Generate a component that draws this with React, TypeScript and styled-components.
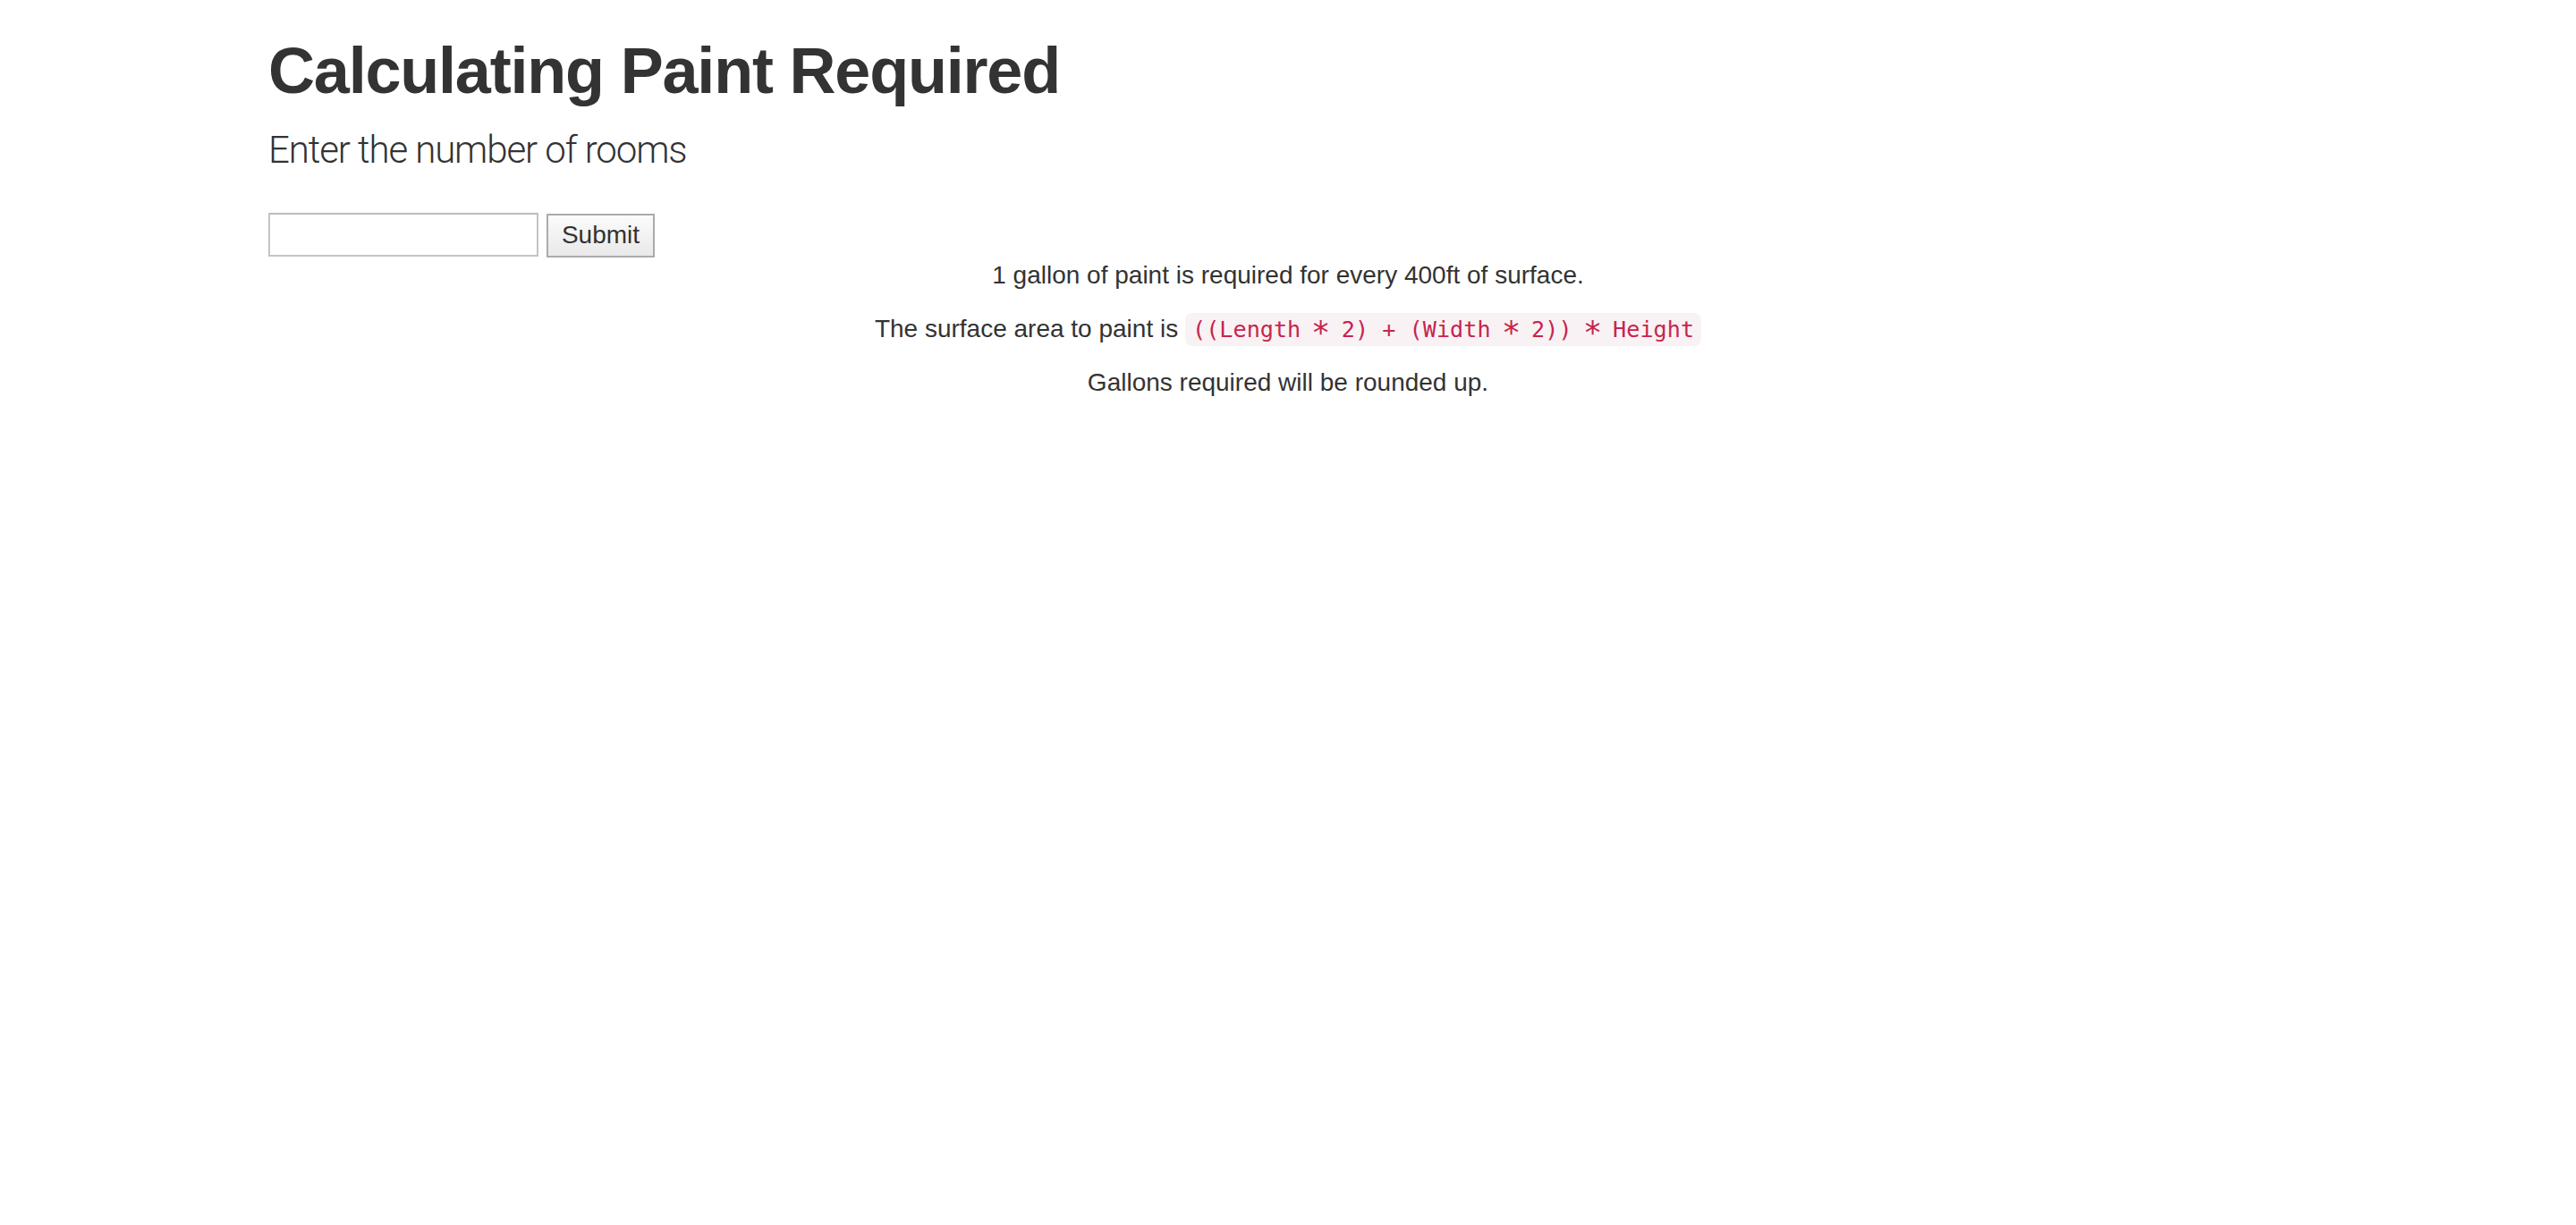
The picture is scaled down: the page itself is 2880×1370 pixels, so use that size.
import React from "react";
import styled, { createGlobalStyle } from "styled-components";

const GlobalStyle = createGlobalStyle`
  html, body {
    margin: 0;
    padding: 0;
    background: #ffffff;
  }
  body {
    font-family: "Liberation Sans", Helvetica, Arial, sans-serif;
    font-size: 28px;
    line-height: 1.42857143;
    color: #333333;
  }
  * { box-sizing: border-box; }
`;

const Container = styled.div`
  width: 2340px;
  margin: 0 auto;
  padding: 0 30px;
`;

const Title = styled.h1`
  font-family: "Liberation Sans", Helvetica, Arial, sans-serif;
  font-size: 72px;
  font-weight: 700;
  letter-spacing: -1.2px;
  line-height: 1.1;
  margin: 40px 0 20px;
  color: #333333;
`;

const Lead = styled.p`
  font-family: Roboto, "Liberation Sans", sans-serif;
  font-size: 42px;
  font-weight: 300;
  letter-spacing: -1.1px;
  line-height: 1.4;
  margin: 0 0 40px;
`;

const Form = styled.form`
  display: flex;
  align-items: flex-start;
  gap: 9px;
  margin: 0;
`;

const TextInput = styled.input`
  width: 302px;
  height: 49px;
  margin: 0;
  padding: 2px 6px;
  border: 2px solid #c4c4c4;
  border-top-color: #bcbcbc;
  background: #ffffff;
  font-family: "Liberation Sans", Arial, sans-serif;
  font-size: 26px;
  color: #333333;
  outline: none;
`;

const SubmitButton = styled.button`
  width: 121px;
  height: 49px;
  margin: 1px 0 0;
  padding: 0;
  border: 2px solid #ababab;
  border-radius: 0;
  background: linear-gradient(#fbfbfb, #e9e9e9);
  font-family: "Liberation Sans", Helvetica, Arial, sans-serif;
  font-size: 28px;
  line-height: 1;
  color: #333333;
  cursor: pointer;
`;

const CenterText = styled.p`
  text-align: center;
  margin: 0 0 20px;
`;

const Code = styled.code`
  font-family: "DejaVu Sans Mono", Menlo, Monaco, Consolas, monospace;
  font-size: 90%;
  padding: 4px 8px;
  color: #c7254e;
  background-color: #f9f2f4;
  border-radius: 8px;
`;

const Star = styled.span`
  display: inline-block;
  transform: translateY(0.12em) scale(1.4);
  transform-origin: 50% 42%;
`;

export default function App() {
  return (
    <>
      <GlobalStyle />
      <Container>
        <Title>Calculating Paint Required</Title>
        <Lead>Enter the number of rooms</Lead>
        <Form onSubmit={(e) => e.preventDefault()}>
          <TextInput type="text" />
          <SubmitButton type="submit">Submit</SubmitButton>
        </Form>
        <CenterText>1 gallon of paint is required for every 400ft of surface.</CenterText>
        <CenterText>
          The surface area to paint is{" "}
          <Code>
            ((Length <Star>*</Star> 2) + (Width <Star>*</Star> 2)) <Star>*</Star> Height
          </Code>
        </CenterText>
        <CenterText>Gallons required will be rounded up.</CenterText>
      </Container>
    </>
  );
}
